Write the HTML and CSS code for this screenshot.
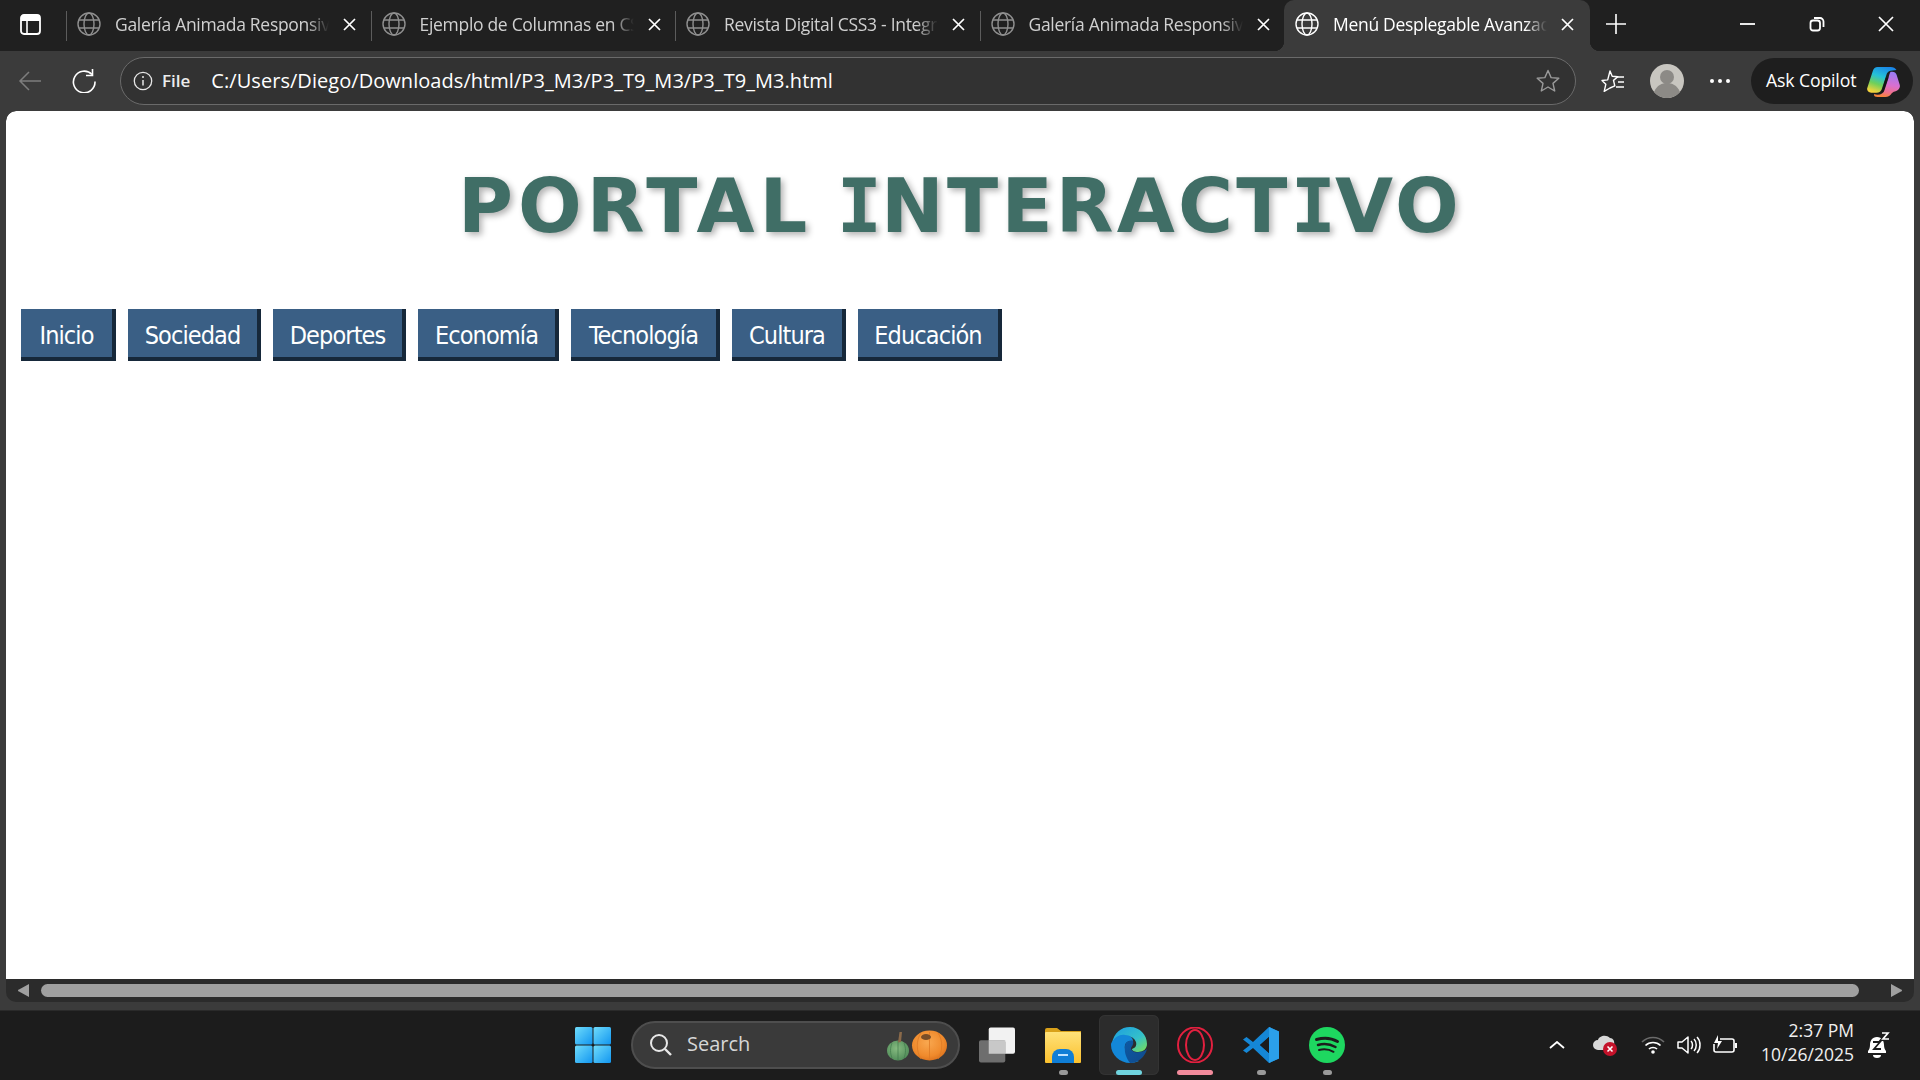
FILE: index.html
```html
<!DOCTYPE html>
<html lang="es">
<head>
<meta charset="utf-8">
<title>Menú Desplegable Avanzado</title>
<link rel="stylesheet" href="styles.css">
</head>
<body>
<svg class="defs" width="0" height="0" aria-hidden="true">
  <defs>
    <symbol id="globe" viewBox="0 0 24 24">
      <g fill="none" stroke="currentColor" stroke-width="1.4">
        <circle cx="12" cy="12" r="11"/>
        <ellipse cx="12" cy="12" rx="5" ry="11"/>
        <path d="M2 8h20M2 16h20"/>
      </g>
    </symbol>
    <symbol id="x" viewBox="0 0 13 13">
      <path d="M1 1l11 11M12 1L1 12" fill="none" stroke="currentColor" stroke-width="1.7"/>
    </symbol>
    <linearGradient id="edgeA" x1="0" y1="0" x2="1" y2="1"><stop offset="0" stop-color="#1b9de2"/><stop offset=".6" stop-color="#35c1c9"/><stop offset="1" stop-color="#7ee04f"/></linearGradient>
    <linearGradient id="edgeB" x1="0" y1="0" x2="1" y2="1"><stop offset="0" stop-color="#0c59a4"/><stop offset="1" stop-color="#114a8b"/></linearGradient>
    <linearGradient id="copA" x1="0.7" y1="0" x2="0.3" y2="1"><stop offset="0" stop-color="#1a86e8"/><stop offset=".4" stop-color="#25c2d8"/><stop offset=".7" stop-color="#6fd05a"/><stop offset="1" stop-color="#f5d33c"/></linearGradient>
    <linearGradient id="copB" x1="0.6" y1="0" x2="0.4" y2="1"><stop offset="0" stop-color="#9a7cf5"/><stop offset=".5" stop-color="#d96fd0"/><stop offset=".8" stop-color="#f0708a"/><stop offset="1" stop-color="#f7853a"/></linearGradient>
    <linearGradient id="folder" x1="0" y1="0" x2="0" y2="1"><stop offset="0" stop-color="#ffe27a"/><stop offset="1" stop-color="#fbc02d"/></linearGradient>
    <linearGradient id="win" x1="0" y1="0" x2="1" y2="1"><stop offset="0" stop-color="#6fdcfb"/><stop offset="1" stop-color="#1296f0"/></linearGradient>
    <radialGradient id="pumpO" cx=".45" cy=".4" r=".65"><stop offset="0" stop-color="#f9a850"/><stop offset=".7" stop-color="#ef8a2c"/><stop offset="1" stop-color="#d96f1c"/></radialGradient>
    <radialGradient id="pumpG" cx=".45" cy=".4" r=".65"><stop offset="0" stop-color="#86bb80"/><stop offset="1" stop-color="#4f8a58"/></radialGradient>
  </defs>
</svg>

<header class="tabstrip">
  <svg class="win-icon" viewBox="0 0 21 21"><rect x="1" y="1" width="19" height="19" rx="3" fill="none" stroke="#fff" stroke-width="1.8"/><path d="M1 4a3 3 0 0 1 3-3h13a3 3 0 0 1 3 3v3H1z" fill="#fff"/><path d="M7 7v13" stroke="#fff" stroke-width="1.6"/></svg>
  <div class="tab"><svg class="globe"><use href="#globe"/></svg><span class="tab-label">Galería Animada Responsive</span><svg class="tab-x"><use href="#x"/></svg></div>
  <div class="tab"><svg class="globe"><use href="#globe"/></svg><span class="tab-label">Ejemplo de Columnas en CSS3</span><svg class="tab-x"><use href="#x"/></svg></div>
  <div class="tab"><svg class="globe"><use href="#globe"/></svg><span class="tab-label">Revista Digital CSS3 - Integrada</span><svg class="tab-x"><use href="#x"/></svg></div>
  <div class="tab"><svg class="globe"><use href="#globe"/></svg><span class="tab-label">Galería Animada Responsive</span><svg class="tab-x"><use href="#x"/></svg></div>
  <div class="tab tab-active"><svg class="globe"><use href="#globe"/></svg><span class="tab-label">Menú Desplegable Avanzado</span><svg class="tab-x"><use href="#x"/></svg></div>
  <svg class="new-tab" viewBox="0 0 22 22"><path d="M11 1v20M1 11h20" stroke="#fff" stroke-width="1.6" fill="none"/></svg>
  <div class="win-controls">
    <svg class="ctl" viewBox="0 0 16 16"><path d="M0 8h15" stroke="#fff" stroke-width="1.8"/></svg>
    <svg class="ctl" viewBox="0 0 16 16"><rect x="1.5" y="4.5" width="9.5" height="10" rx="2.5" fill="none" stroke="#fff" stroke-width="1.8"/><path d="M5 2h6a3.5 3.5 0 0 1 3.500 3.500V11" fill="none" stroke="#fff" stroke-width="1.800"/></svg>
    <svg class="ctl" viewBox="0 0 16 16"><path d="M1 1l14 14M15 1L1 15" stroke="#fff" stroke-width="1.7"/></svg>
  </div>
</header>

<div class="toolbar">
  <svg class="back" viewBox="0 0 24 22"><path d="M23 11H2M11 2l-9 9 9 9" fill="none" stroke="#7d7d7d" stroke-width="1.5"/></svg>
  <svg class="reload" viewBox="0 0 24 24"><path d="M20 5.500A10.800 10.800 0 1 0 23 12.500" fill="none" stroke="#fff" stroke-width="1.600"/><path d="M20.500 0v6.500H14" fill="none" stroke="#fff" stroke-width="1.600"/></svg>
  <div class="address">
    <svg class="info" viewBox="0 0 20 20"><circle cx="10" cy="10" r="8.700" fill="none" stroke="#e6e6e6" stroke-width="1.300"/><path d="M10 9v5.500" stroke="#e6e6e6" stroke-width="1.500"/><circle cx="10" cy="6" r="1" fill="#e6e6e6"/></svg>
    <span class="file">File</span>
    <span class="url">C:/Users/Diego/Downloads/html/P3_M3/P3_T9_M3/P3_T9_M3.html</span>
    <svg class="star" viewBox="0 0 24 24"><path d="M12 1.500l3.100 7.100 7.700.7-5.800 5.100 1.700 7.600L12 18l-6.700 4 1.700-7.600-5.800-5.100 7.700-.7z" fill="none" stroke="#9a9a9a" stroke-width="1.400" stroke-linejoin="round"/></svg>
  </div>
  <svg class="favs" viewBox="0 0 24 24"><path d="M9 2l2.200 5.200 5.600.5-4.300 3.700 1.300 5.500L9 19l-5.800 3.300 1.600-7L1 11.500l5.700-.6z" fill="none" stroke="#fff" stroke-width="1.400" stroke-linejoin="round"/><path d="M15 8h8M17 13h6M15 18h8" stroke="#fff" stroke-width="1.500"/></svg>
  <svg class="profile" viewBox="0 0 34 34"><circle cx="17" cy="17" r="17" fill="#c8c6c0"/><circle cx="17" cy="13" r="7" fill="#8c8a86"/><path d="M4 28c3-7 8-9 13-9s10 2 13 9a17 17 0 0 1-26 0z" fill="#8c8a86"/></svg>
  <div class="dots"><i></i><i></i><i></i></div>
  <div class="copilot">
    <span class="copilot-text">Ask Copilot</span>
    <svg class="copilot-logo" viewBox="0 0 28 31" preserveAspectRatio="none"><path d="M9 0h11c2.500 0 4 1 5 3l-5 1c-2 .5-3 2-3.500 4l-4 15c-.6 2-2 3.500-4.500 3.500H3.500C1 26.500-.5 24 .3 21.500L5 4c.6-2.500 2-4 4-4z" fill="url(#copA)"/><path d="M20 5h1.500c1.800 0 3 1 3.600 3l2.600 10c1 3.500-1.500 7-5 7.500L21 27c-1 2.500-3 4-5.500 4H9c-2.500 0-3.500-1.500-2.800-3 .7.500 1.600.7 2.800.7 3 0 5-1.700 5.800-4.700l3.500-13c.4-1.800.700-4 1.700-6z" fill="url(#copB)"/><path d="M18 11l-4 14-2 2 4-16z" fill="#141414"/></svg>
  </div>
</div>

<div class="frame">
  <main class="page">
    <h1 class="title"><span class="title-first">PORTAL</span> <span class="title-i">I</span>NTERACT<span class="title-i">I</span>VO</h1>
    <nav class="menu">
      <a class="menu-item">Inicio</a>
      <a class="menu-item">Sociedad</a>
      <a class="menu-item">Deportes</a>
      <a class="menu-item">Economía</a>
      <a class="menu-item">Tecnología</a>
      <a class="menu-item">Cultura</a>
      <a class="menu-item">Educación</a>
    </nav>
  </main>
  <div class="hscroll">
    <svg class="arrow" viewBox="0 0 11 13"><path d="M11 0v13L1 7.500a1 1 0 0 1 0-2z" fill="#a0a0a0"/></svg>
    <div class="thumb"></div>
    <svg class="arrow" viewBox="0 0 11 13"><path d="M0 0v13l10-5.500a1 1 0 0 0 0-2z" fill="#a0a0a0"/></svg>
  </div>
</div>

<footer class="taskbar">
  <svg class="task-start" viewBox="0 0 36 36"><g fill="url(#win)"><rect width="17.500" height="17.500" rx="1.500"/><rect x="18.500" width="17.500" height="17.500" rx="1.500"/><rect y="18.500" width="17.500" height="17.500" rx="1.500"/><rect x="18.500" y="18.500" width="17.500" height="17.500" rx="1.500"/></g></svg>
  <div class="search">
    <svg class="search-icon" viewBox="0 0 24 24"><circle cx="10" cy="10" r="8" fill="none" stroke="#e8e8e8" stroke-width="2"/><path d="M16 16l6 6" stroke="#e8e8e8" stroke-width="2.400"/></svg>
    <span class="search-text">Search</span>
    <svg class="pumpkins" viewBox="0 0 60 31"><ellipse cx="11" cy="20.500" rx="11" ry="10" fill="url(#pumpG)"/><path d="M5 13c-2 5-2 10 0 15M11 11v19M17 13c2 5 2 10 0 15" stroke="#3f7a4a" stroke-width=".7" fill="none"/><path d="M15 2l-1 10-3 .5 1.500-10.500z" fill="#8a6a4a"/><ellipse cx="42.500" cy="15.500" rx="17.500" ry="15" fill="url(#pumpO)"/><path d="M34 3c-5 7-5 18 0 26M51 3c5 7 5 18 0 26M42.500 2v27" stroke="#dd7a24" stroke-width=".8" fill="none"/><ellipse cx="39" cy="7" rx="5" ry="3" fill="#7a4e28"/></svg>
  </div>
  <div class="task-app task-view"><svg class="app-icon" viewBox="0 0 37 36"><rect x="10" width="27" height="27" rx="2" fill="#f2f2f2"/><rect y="13" width="27" height="23" rx="2" fill="#6e6e6e"/><rect x="10" y="13" width="17" height="14" fill="#c8c8c8"/></svg></div>
  <div class="task-app"><svg class="app-icon" viewBox="0 0 36 36"><path d="M0 3a2 2 0 0 1 2-2h10l4 3h20v4H0z" fill="#d9a11a"/><rect y="5" width="36" height="31" rx="1" fill="url(#folder)"/><path d="M7 30a8 8 0 0 1 8-8h6a8 8 0 0 1 8 8v6H7z" fill="#0f7ed6"/><rect x="13" y="27" width="10" height="2" fill="#bfe3ff"/></svg><i class="pip"></i></div>
  <div class="task-app task-active"><svg class="app-icon" viewBox="0 0 36 36"><path d="M1 16C3 6 10 0 19 0c10 0 17 8 17 17 0 5-4 8-9 8-3 0-6-1-6-3 3-1 5-3 4-7-2-5-7-7-12-5-6 2-9 5-12 6z" fill="url(#edgeA)"/><path d="M1 15c3-5 8-8 13-7 5 0 8 3 8 6-6-1-9 3-8 8 1 6 6 12 14 12-3 1-6 2-9 2C9 36 0 28 0 18c0-1 0-2 1-3z" fill="#1387d8"/><path d="M14 20c0-5 3-7 8-6 1 3-1 5-2 7 0 3 4 5 8 4 3 0 6-1 8-3-2 8-9 14-17 14-3-4-6-10-5-16z" fill="url(#edgeB)"/></svg><i class="pip pip-edge"></i></div>
  <div class="task-app"><svg class="app-icon" viewBox="0 0 36 36"><ellipse cx="18" cy="18" rx="17" ry="17.500" fill="none" stroke="#e2203f" stroke-width="2"/><ellipse cx="18" cy="18" rx="9" ry="15" fill="none" stroke="#e2203f" stroke-width="2"/></svg><i class="pip pip-opera"></i></div>
  <div class="task-app"><svg class="app-icon" viewBox="0 0 36 36"><path d="M26 0l10 4.500v27L26 36 10 21l-6.500 5L0 23.500 7 18 0 12.500 3.500 10l6.500 5zM26 10l-9 8 9 8z" fill="#1587d6"/><path d="M26 0l10 4.500v27L26 36z" fill="#2ba0ea"/><path d="M26 10l-9 8 9 8z" fill="#1c1c1c"/></svg><i class="pip"></i></div>
  <div class="task-app"><svg class="app-icon" viewBox="0 0 36 36"><circle cx="18" cy="18" r="18" fill="#1ed760"/><g fill="none" stroke="#1c1c1c" stroke-linecap="round"><path d="M7.500 12.500c7-2 15-1.500 21 2" stroke-width="3"/><path d="M9 18c6-1.600 12-1 17.500 2" stroke-width="2.500"/><path d="M10 23c5-1.200 10-.8 14.500 1.800" stroke-width="2"/></g></svg><i class="pip"></i></div>

  <div class="tray">
    <svg class="tray-chev" viewBox="0 0 16 8"><path d="M1 7l7-6 7 6" fill="none" stroke="#fff" stroke-width="1.800"/></svg>
    <svg class="tray-cloud" viewBox="0 0 25 24"><path d="M5 17a5 5 0 0 1 0-10c1-4 8-6 12-2 3 0 5 3 4 7l-6 5z" fill="#d8d8d8"/><circle cx="17" cy="16" r="7" fill="#c4122a"/><path d="M14.500 13.500l5 5M19.500 13.500l-5 5" stroke="#fff" stroke-width="1.600"/></svg>
    <svg class="tray-icon" viewBox="0 0 24 20"><g fill="none" stroke-width="1.700"><path d="M1 7c6-6 16-6 22 0" stroke="#6a6a6a"/><path d="M4.500 10.500c4-4 11-4 15 0" stroke="#fff"/><path d="M8 14c2-2 6-2 8 0" stroke="#fff"/></g><circle cx="12" cy="17" r="1.800" fill="#fff"/></svg>
    <svg class="tray-icon" viewBox="0 0 24 20"><path d="M1 7h4l6-5v16l-6-5H1z" fill="none" stroke="#fff" stroke-width="1.500" stroke-linejoin="round"/><path d="M14 6c2 2 2 6 0 8M17 4c3 3 3 9 0 12M20 2c4 4 4 12 0 16" fill="none" stroke="#fff" stroke-width="1.500"/></svg>
    <svg class="tray-icon" viewBox="0 0 24 20"><path d="M7 4h12a2 2 0 0 1 2 2v9a2 2 0 0 1-2 2H3a2 2 0 0 1-2-2V9" fill="none" stroke="#fff" stroke-width="1.600"/><path d="M22 8h2v5h-2z" fill="#fff"/><path d="M5 0L1 8h4l-1 6 5-8H5z" fill="#fff"/></svg>
    <div class="clock"><span>2:37 PM</span><span>10/26/2025</span></div>
    <svg class="bell" viewBox="0 0 22 26"><path d="M9 5c-5 0-7 4-7 8 0 3-1 5-2 6v2h18v-2c-1-1-2-3-2-6 0-4-2-8-7-8z" fill="#fff"/><path d="M5 23h8a4 3 0 0 1-8 0z" fill="#fff"/><path d="M5 10h7l-6 7h7" fill="none" stroke="#1c1c1c" stroke-width="1.800"/><path d="M14 1h6l-5 6h6" fill="none" stroke="#1c1c1c" stroke-width="4"/><path d="M14 1h6l-5 6h6" fill="none" stroke="#fff" stroke-width="1.700"/></svg>
  </div>
</footer>
</body>
</html>
```

FILE: styles.css
```css
* { box-sizing: border-box; }

html, body { height: 100%; }

body {
  margin: 0;
  height: 1080px;
  overflow: hidden;
  display: flex;
  flex-direction: column;
  background: #3b3b3b;
  color: #fff;
  font-family: "Open Sans", "Noto Sans", sans-serif;
}

.defs { position: absolute; }

/* tab strip */
.tabstrip {
  height: 51px;
  flex: none;
  display: flex;
  align-items: center;
  background: #202020;
  padding: 0 0 3px 20px;
}

.win-icon { width: 21px; height: 21px; margin-right: 25px; flex: none; }

.tab {
  width: 304.5px;
  height: 51px;
  margin-bottom: -3px;
  flex: none;
  display: flex;
  align-items: center;
  padding: 0 0 3px 11px;
  color: #d0d0d0;
  background: #202020;
  position: relative;
}

.tab::before {
  content: "";
  position: absolute;
  left: 0;
  top: 11px;
  height: 30px;
  width: 1px;
  background: #5c5c5c;
}

.globe { width: 24px; height: 24px; flex: none; color: #8f8f8f; margin-right: 14px; }

.tab-label {
  width: 214px;
  flex: none;
  overflow: hidden;
  white-space: nowrap;
  font-size: 17.500px;
  line-height: 24px;
  letter-spacing: -0.3px;
  margin-top: -1px;
  -webkit-mask-image: linear-gradient(to right, #000 90%, transparent 100%);
  mask-image: linear-gradient(to right, #000 90%, transparent 100%);
}

.tab-x { width: 13px; height: 13px; flex: none; margin-left: 14px; color: #fff; }

.tab-active {
  width: 306px;
  background: #3b3b3b;
  color: #fff;
  border-radius: 10px 10px 0 0;
}

.tab-active::before,
.tab-active::after {
  content: "";
  position: absolute;
  top: auto;
  bottom: 0;
  width: 10px;
  height: 10px;
  background: radial-gradient(circle at 0 0, #202020 10px, #3b3b3b 10.500px);
}

.tab-active::before { left: -10px; }

.tab-active::after {
  right: -10px;
  background: radial-gradient(circle at 100% 0, #202020 10px, #3b3b3b 10.500px);
}

.tab-active .globe { color: #fff; }

.new-tab { width: 22px; height: 22px; flex: none; margin-left: 15px; }

.win-controls {
  display: flex;
  align-items: center;
  gap: 53px;
  margin-left: 113px;
}

.ctl { width: 16px; height: 16px; flex: none; }

/* toolbar */
.toolbar {
  height: 60px;
  flex: none;
  display: flex;
  align-items: center;
  background: #3b3b3b;
  padding: 0 8px 0 18px;
}

.back { width: 24px; height: 22px; flex: none; margin-right: 30px; }

.reload { width: 24px; height: 24px; flex: none; margin-right: 24px; }

.address {
  width: 1456px;
  height: 48px;
  flex: none;
  display: flex;
  align-items: center;
  background: #323232;
  border: 1.500px solid #6a6a6a;
  border-radius: 24px;
  padding: 0 15px 0 12px;
}

.info { width: 20px; height: 20px; flex: none; margin-right: 9px; }

.file { font-size: 17px; font-weight: 600; line-height: 24px; margin: -1px 21px 0 0; color: #ececec; }

.url { flex: 1; font-size: 20px; line-height: 24px; letter-spacing: 0.05px; white-space: nowrap; }

.star { width: 24px; height: 24px; flex: none; }

.favs { width: 24px; height: 24px; flex: none; margin-left: 25px; }

.profile { width: 34px; height: 34px; flex: none; margin-left: 25px; }

.dots { display: flex; gap: 4px; margin-left: 26px; width: 20px; flex: none; }

.dots i { width: 4px; height: 4px; border-radius: 50%; background: #fff; }

.copilot {
  width: 162px;
  height: 46px;
  flex: none;
  margin-left: 21px;
  display: flex;
  align-items: center;
  padding-left: 15px;
  background: #1e1e1e;
  border-radius: 23px;
}

.copilot-text { width: 101px; flex: none; font-size: 17.700px; line-height: 24px; margin-top: -2px; letter-spacing: -0.15px; white-space: nowrap; }

.copilot-logo { width: 33px; height: 30px; flex: none; margin-top: 1px; }

/* page */
.frame {
  height: 891px;
  flex: none;
  margin: 0 6px;
  display: flex;
  flex-direction: column;
  background: #2b2b2b;
  border-radius: 10px;
  overflow: hidden;
}

.page {
  height: 868px;
  flex: none;
  background: #fff;
  padding: 52px 15px 0;
  border-radius: 10px 10px 0 0;
}

.title {
  margin: 0;
  text-align: center;
  font-family: "DejaVu Sans", Verdana, sans-serif;
  font-size: 75px;
  line-height: 86px;
  font-weight: 700;
  letter-spacing: 3.200px;
  word-spacing: -5px;
  color: #406e66;
  text-shadow: 3px 3px 6px rgba(0, 0, 0, 0.3);
}

.title-first { letter-spacing: 5px; }

.title-i {
  font-family: "DejaVu Sans Mono", "DejaVu Sans", monospace;
  letter-spacing: -0.800px;
}

.menu {
  display: grid;
  grid-template-columns: 95px 133px 133px 141px 149px 114px 144px;
  justify-content: start;
  gap: 12px;
  margin-top: 60px;
}

.menu-item {
  display: block;
  height: 52px;
  border-style: solid;
  border-width: 0 4px 4px 0;
  border-color: #3a5f85 #16283a #16283a #3a5f85;
  background: #3a5f85;
  background-clip: padding-box;
  color: #fff;
  font-family: "DejaVu Sans", "Noto Sans", sans-serif;
  font-stretch: condensed;
  font-size: 25px;
  line-height: 54px;
  letter-spacing: -0.900px;
  text-align: center;
  white-space: nowrap;
}

.hscroll {
  height: 23px;
  flex: none;
  display: flex;
  align-items: center;
  padding: 0 12px;
}

.arrow { width: 11px; height: 13px; flex: none; }

.thumb {
  flex: 1;
  height: 13px;
  margin: 0 32px 0 12px;
  background: #a0a0a0;
  border-radius: 7px;
}

/* taskbar */
.taskbar {
  height: 70px;
  flex: none;
  margin-top: 8px;
  display: flex;
  align-items: center;
  padding: 0 0 2px 575px;
  background: #1c1c1c;
  border-top: 1px solid #2a2a2a;
}

.task-start { width: 36px; height: 36px; flex: none; margin-right: 20px; }

.search {
  width: 329px;
  height: 48px;
  flex: none;
  display: flex;
  align-items: center;
  background: #3a3a3a;
  border: 2px solid #4e4e4e;
  border-radius: 24px;
  padding-left: 16px;
  margin-right: 4px;
}

.search-icon { width: 24px; height: 24px; flex: none; margin-right: 14px; }

.search-text { font-size: 20px; line-height: 24px; margin-top: -2px; color: #d6d6d6; flex: 1; }

.pumpkins { width: 60px; height: 31px; flex: none; margin-right: 11px; margin-top: 1px; }

.task-app {
  width: 66px;
  height: 60px;
  flex: none;
  display: flex;
  align-items: center;
  justify-content: center;
  position: relative;
}

.app-icon { width: 36px; height: 36px; flex: none; }

.task-active {
  width: 60px;
  margin: 0 3px;
  background: #2c2c2c;
  border-radius: 6px;
  box-shadow: inset 0 0 0 1px #333;
}

.pip {
  position: absolute;
  left: 50%;
  bottom: 0;
  width: 9px;
  height: 5px;
  margin-left: -4.500px;
  border-radius: 3px;
  background: #9a9a9a;
}

.pip-edge { width: 26px; margin-left: -13px; background: #6fd3de; }

.pip-opera { width: 36px; margin-left: -18px; background: #f28b9c; }

.tray {
  margin-left: auto;
  display: flex;
  align-items: center;
  padding-right: 30px;
}

.tray-chev { width: 16px; height: 8px; flex: none; margin-right: 28px; }

.tray-cloud { width: 25px; height: 24px; flex: none; margin-right: 23px; }

.tray-icon { width: 24px; height: 20px; flex: none; margin-right: 12px; }

.clock {
  width: 105px;
  display: flex;
  flex-direction: column;
  align-items: flex-end;
  gap: 1px;
  font-size: 17.500px;
  line-height: 23px;
  margin-top: -4px;
  color: #f0f0f0;
  margin-right: 14px;
}

.bell { width: 22px; height: 26px; flex: none; }
```
